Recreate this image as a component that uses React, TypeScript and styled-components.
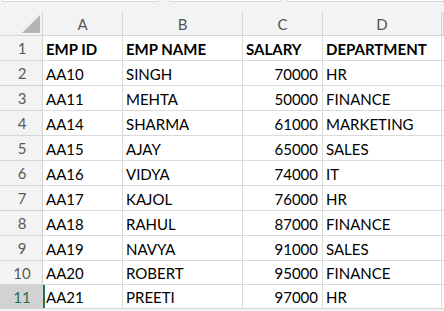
import styled, { createGlobalStyle } from "styled-components";

const GlobalStyle = createGlobalStyle`
    html, body {
        margin: 0;
        padding: 0;
        background: #f3f3f3;
        overflow: hidden;
    }
    body {
        font-family: Lato, "Liberation Sans", sans-serif;
    }
`;

const rows = [
    ["AA10", "SINGH", "70000", "HR"],
    ["AA11", "MEHTA", "50000", "FINANCE"],
    ["AA14", "SHARMA", "61000", "MARKETING"],
    ["AA15", "AJAY", "65000", "SALES"],
    ["AA16", "VIDYA", "74000", "IT"],
    ["AA17", "KAJOL", "76000", "HR"],
    ["AA18", "RAHUL", "87000", "FINANCE"],
    ["AA19", "NAVYA", "91000", "SALES"],
    ["AA20", "ROBERT", "95000", "FINANCE"],
    ["AA21", "PREETI", "97000", "HR"],
];

const columns = ["A", "B", "C", "D"];
const widths = "43px 80px 120px 80px 119px 1fr";

const App = () => {
    return (
        <Sheet>
            <GlobalStyle />
            <FormulaStrip>
                <FieldBox $width={155} />
                <FieldBox $width={111} />
                <FieldBox $width={170} />
            </FormulaStrip>
            <Grid>
                <HeaderRow>
                    <Corner>
                        <svg width="18" height="18" viewBox="0 0 18 18">
                            <polygon points="18,0 18,18 0,18" fill="#b5b5b5" />
                        </svg>
                    </Corner>
                    {columns.map((c) => (
                        <ColHeader key={c}>{c}</ColHeader>
                    ))}
                    <ColHeader />
                </HeaderRow>
                <Row $height={25}>
                    <RowNumber>1</RowNumber>
                    <Cell $bold>EMP ID</Cell>
                    <Cell $bold>EMP NAME</Cell>
                    <Cell $bold>SALARY</Cell>
                    <Cell $bold>DEPARTMENT</Cell>
                    <Cell />
                </Row>
                {rows.map((r, i) => {
                    const num = i + 2;
                    const active = num === 11;
                    return (
                        <Row key={num} $height={num >= 10 ? 24 : 25}>
                            <RowNumber $active={active}>{num}</RowNumber>
                            <Cell $active={active}>{r[0]}</Cell>
                            <Cell>{r[1]}</Cell>
                            <Cell $right>{r[2]}</Cell>
                            <Cell>{r[3]}</Cell>
                            <Cell />
                        </Row>
                    );
                })}
            </Grid>
        </Sheet>
    );
};

const Sheet = styled.div`
    width: 444px;
    height: 311px;
    background: #f3f3f3;
    display: flex;
    flex-direction: column;
    overflow: hidden;
`;

const FormulaStrip = styled.div`
    height: 12px;
    display: flex;
    align-items: flex-start;
    gap: 10px;
    padding-left: 2px;

    & > div:nth-child(3) {
        margin-left: -5px;
        flex: 1;
    }
`;

const FieldBox = styled.div<{ $width: number }>`
    width: ${(p) => p.$width}px;
    height: 1px;
    background: #ffffff;
    border: 1px solid #d6d6d6;
    border-top: none;
`;

const Grid = styled.div`
    display: flex;
    flex-direction: column;
`;

const HeaderRow = styled.div`
    display: grid;
    grid-template-columns: ${widths};
    height: 24px;
`;

const Corner = styled.div`
    border-right: 1px solid #d4d4d4;
    border-bottom: 1px solid #d4d4d4;
    display: flex;
    align-items: flex-end;
    justify-content: flex-end;
    padding: 0 2px 2px 0;
`;

const ColHeader = styled.div`
    border-right: 1px solid #d4d4d4;
    border-bottom: 1px solid #d4d4d4;
    display: flex;
    align-items: center;
    justify-content: center;
    font-size: 15px;
    color: #555555;
    padding-top: 1px;
`;

const Row = styled.div<{ $height: number }>`
    display: grid;
    grid-template-columns: ${widths};
    height: ${(p) => p.$height}px;
`;

const RowNumber = styled.div<{ $active?: boolean }>`
    border-right: 1px solid #d4d4d4;
    border-bottom: 1px solid #d4d4d4;
    background: ${(p) => (p.$active ? "#d2d2d2" : "#f3f3f3")};
    color: ${(p) => (p.$active ? "#217346" : "#5a5a5a")};
    display: flex;
    align-items: center;
    justify-content: center;
    font-size: 15px;
    padding-left: 2px;
`;

const Cell = styled.div<{ $bold?: boolean; $right?: boolean; $active?: boolean }>`
    background: #ffffff;
    border-right: 1px solid #dadada;
    border-bottom: 1px solid #dadada;
    box-shadow: ${(p) => (p.$active ? "inset 2px 0 0 #217346" : "none")};
    display: flex;
    align-items: center;
    justify-content: ${(p) => (p.$right ? "flex-end" : "flex-start")};
    padding: 1px 4px 0 3px;
    font-size: 15px;
    font-weight: ${(p) => (p.$bold ? 700 : 400)};
    color: #000000;
    white-space: nowrap;
    overflow: hidden;
`;

export default App;
